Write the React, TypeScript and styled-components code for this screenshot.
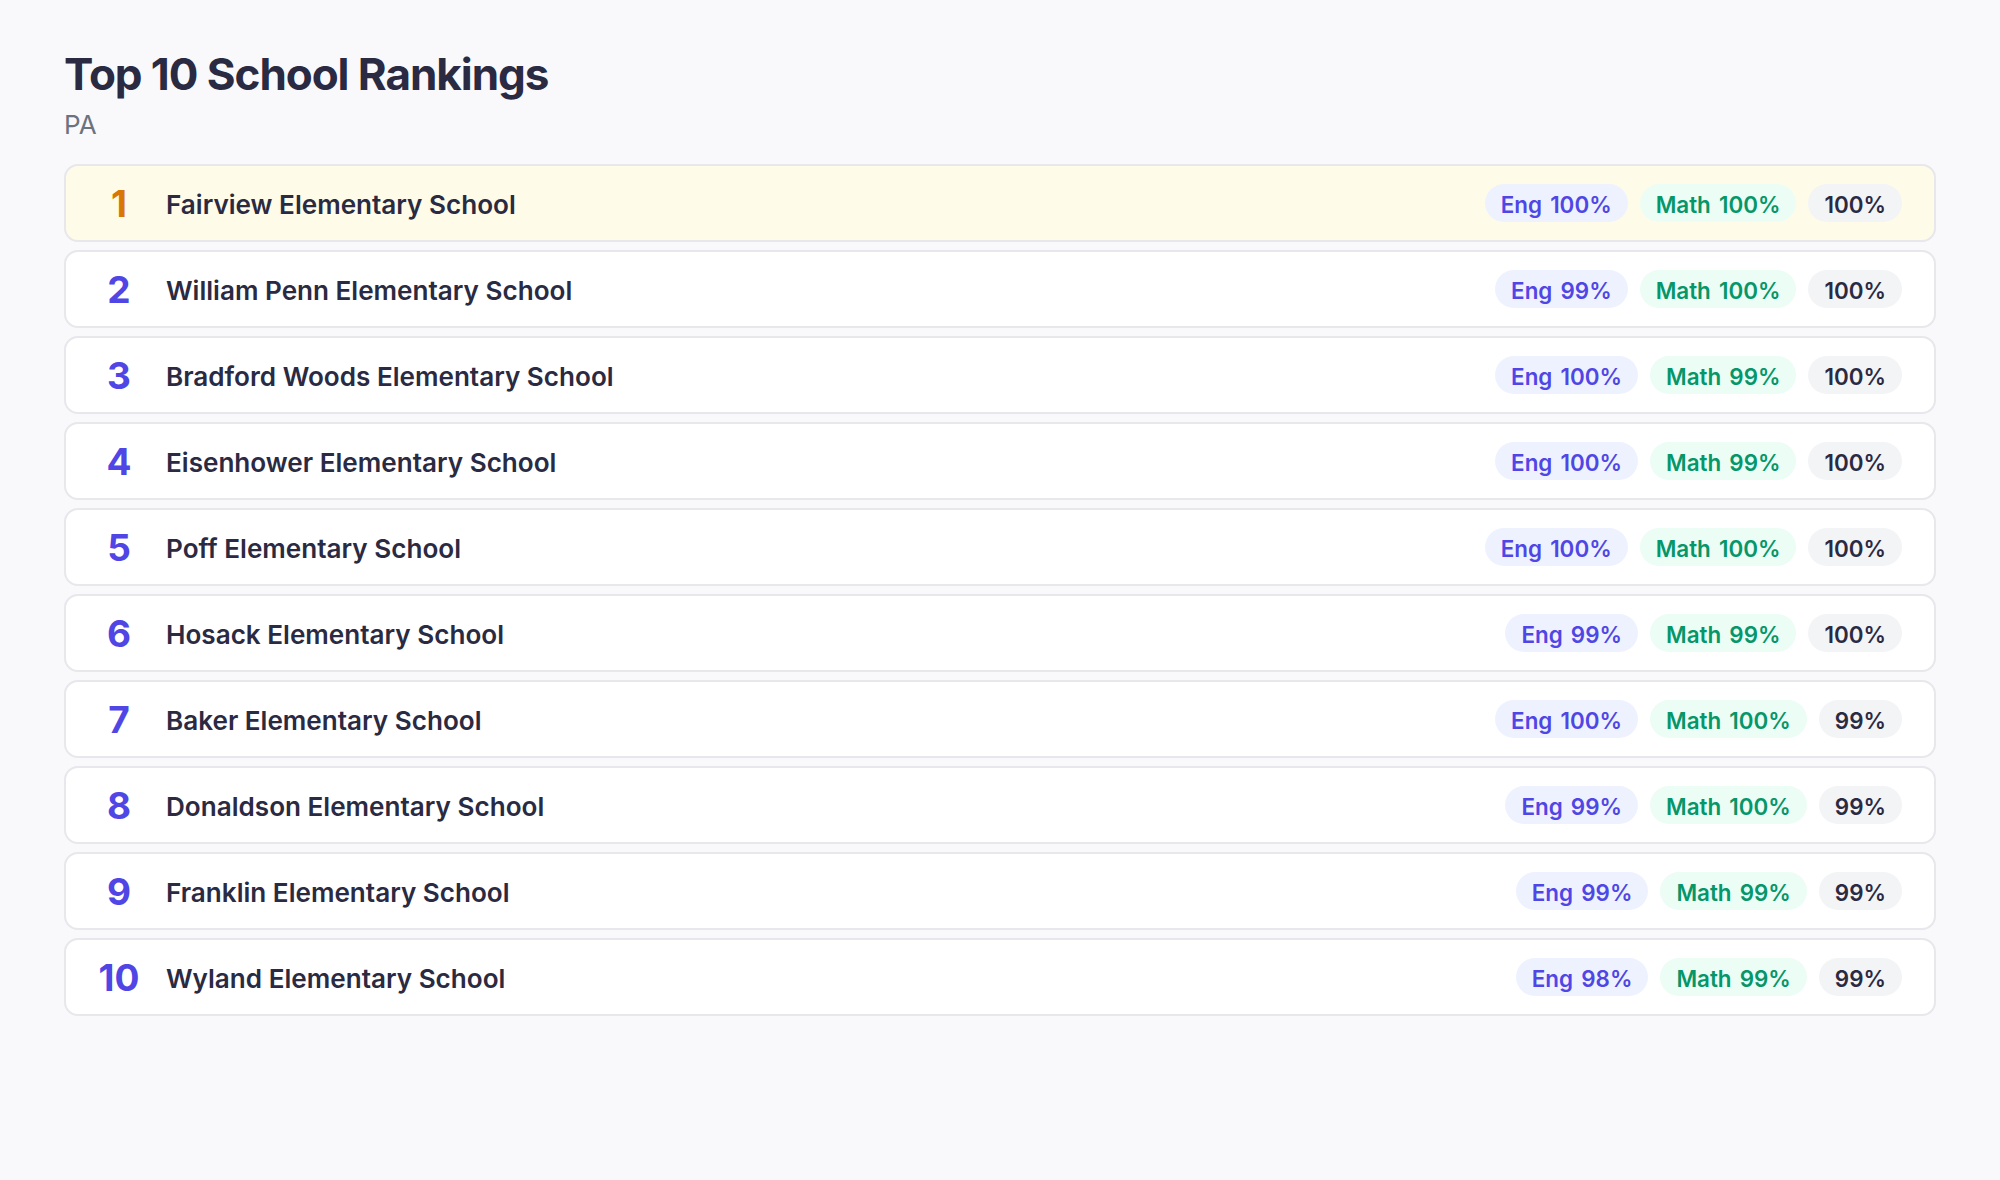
import styled, { createGlobalStyle } from "styled-components";

const GlobalStyle = createGlobalStyle`
  body {
    margin: 0;
    background: #f9f9fb;
    font-family: Inter, "Liberation Sans", sans-serif;
    color: #2a2a42;
  }
`;

const Page = styled.div`
  padding: 47px 64px 48px;
`;

const Title = styled.h1`
  margin: 0;
  font-size: 44px;
  line-height: 54px;
  font-weight: 700;
  letter-spacing: -1.05px;
`;

const Subtitle = styled.div`
  margin: 9px 0 24px;
  font-size: 26px;
  line-height: 30px;
  color: #6b7280;
`;

const List = styled.div`
  display: flex;
  flex-direction: column;
  gap: 8px;
`;

const Row = styled.div<{ $top?: boolean }>`
  display: flex;
  align-items: center;
  height: 78px;
  box-sizing: border-box;
  padding: 0 32px;
  background: ${(p) => (p.$top ? "#fefce8" : "#ffffff")};
  border: 2px solid #e7e7ec;
  border-radius: 14px;
`;

const Rank = styled.div<{ $top?: boolean }>`
  width: 42px;
  margin-right: 26px;
  padding-top: 1px;
  text-align: center;
  font-size: 37px;
  font-weight: 700;
  color: ${(p) => (p.$top ? "#d97706" : "#4f46e5")};
`;

const Name = styled.div`
  flex: 1;
  padding-top: 2px;
  font-size: 26.1px;
  font-weight: 600;
`;

const Pills = styled.div`
  display: flex;
  gap: 12px;
`;

const Pill = styled.span<{ $kind: "eng" | "math" | "all" }>`
  height: 38px;
  box-sizing: border-box;
  padding: 2px 16px 0;
  display: flex;
  align-items: center;
  border-radius: 19px;
  font-size: 22.4px;
  font-weight: 600;
  word-spacing: 2.5px;
  background: ${(p) =>
    p.$kind === "eng" ? "#eef2ff" : p.$kind === "math" ? "#ecfdf5" : "#f3f4f6"};
  color: ${(p) =>
    p.$kind === "eng" ? "#4f46e5" : p.$kind === "math" ? "#059669" : "#2a2a42"};
`;

const schools: [string, number, number, number][] = [
  ["Fairview Elementary School", 100, 100, 100],
  ["William Penn Elementary School", 99, 100, 100],
  ["Bradford Woods Elementary School", 100, 99, 100],
  ["Eisenhower Elementary School", 100, 99, 100],
  ["Poff Elementary School", 100, 100, 100],
  ["Hosack Elementary School", 99, 99, 100],
  ["Baker Elementary School", 100, 100, 99],
  ["Donaldson Elementary School", 99, 100, 99],
  ["Franklin Elementary School", 99, 99, 99],
  ["Wyland Elementary School", 98, 99, 99],
];

const App: React.FC = () => {
  return (
    <Page>
      <GlobalStyle />
      <Title>Top 10 School Rankings</Title>
      <Subtitle>PA</Subtitle>
      <List>
        {schools.map(([name, eng, math, all], i) => (
          <Row key={name} $top={i === 0}>
            <Rank $top={i === 0}>{i + 1}</Rank>
            <Name>{name}</Name>
            <Pills>
              <Pill $kind="eng">Eng {eng}%</Pill>
              <Pill $kind="math">Math {math}%</Pill>
              <Pill $kind="all">{all}%</Pill>
            </Pills>
          </Row>
        ))}
      </List>
    </Page>
  );
};

export default App;
